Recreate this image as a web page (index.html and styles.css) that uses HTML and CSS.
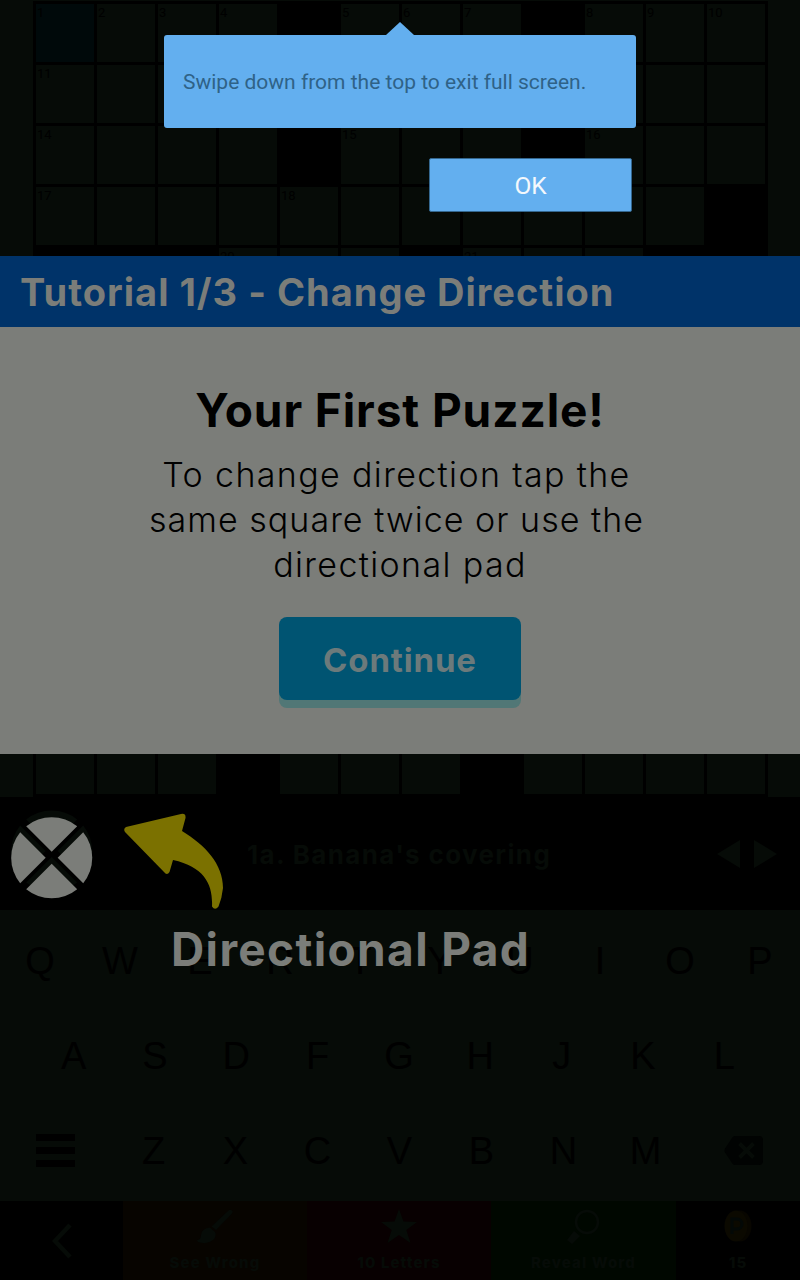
FILE: index.html
```html
<!DOCTYPE html>
<html lang="en">
<head>
<meta charset="utf-8">
<title>Crossword</title>
<link rel="stylesheet" href="styles.css">
</head>
<body>
<div class="app">
  <section class="board"><div class="grid" id="grid"></div></section>

  <section class="clue">
    <svg class="pad" width="110" height="113" viewBox="0 0 110 113">
      <defs>
        <g id="wedges">
          <path id="wedge" d="M0-6L-25.5-31.5A40.5 40.5 0 0 1 25.5-31.5Z"/>
          <use href="#wedge" transform="rotate(90)"/>
          <use href="#wedge" transform="rotate(180)"/>
          <use href="#wedge" transform="rotate(270)"/>
        </g>
      </defs>
      <use href="#wedges" class="ink" transform="translate(51.7 54)"/>
      <use href="#wedges" class="lit" transform="translate(51.7 60.8)"/>
    </svg>
    <p class="clue-text">1a. Banana's covering</p>
    <svg class="steps" width="60" height="28" viewBox="0 0 60 28">
      <path class="ink" d="M0 14L23 0V28ZM60 14L37 0V28Z"/>
    </svg>
  </section>

  <section class="keys">
    <div class="row row-top"><span>Q</span><span>W</span><span>E</span><span>R</span><span>T</span><span>Y</span><span>U</span><span>I</span><span>O</span><span>P</span></div>
    <div class="row row-mid"><span>A</span><span>S</span><span>D</span><span>F</span><span>G</span><span>H</span><span>J</span><span>K</span><span>L</span></div>
    <div class="row row-low">
      <svg width="39" height="35" viewBox="0 0 39 35"><path d="M0 0H39V7H0ZM0 13H39V20H0ZM0 26H39V33H0Z"/></svg>
      <div class="letters"><span>Z</span><span>X</span><span>C</span><span>V</span><span>B</span><span>N</span><span>M</span></div>
      <svg width="39" height="31" viewBox="0 0 39 31"><path class="back" d="M11 0H35Q39 0 39 4V25Q39 29 35 29H11Q9 29 8 27L1 16.500Q0 14.500 1 12.500L8 2Q9 0 11 0Z"/><path class="cross" d="M15.500 7.500L29.500 21.500M29.500 7.500L15.500 21.500"/></svg>
    </div>
  </section>

  <nav class="tools">
    <div class="tool tool-back"><svg width="20" height="36" viewBox="0 0 20 36"><path class="chevron" d="M18 2L3 18L18 34"/></svg></div>
    <div class="tool tool-wrong">
      <svg width="36" height="36" viewBox="0 0 36 36"><path class="ink" d="M34 1Q37 2 34.500 5L19 21L14.500 17.500L31 2Q33 0 34 1ZM13 18.500L18 23Q20 28 16 31Q10 36 1 33L0 31Q4 31 4 26Q5 19 13 18.500Z"/></svg>
      <span>See Wrong</span>
    </div>
    <div class="tool tool-letters">
      <svg width="36" height="36" viewBox="0 0 36 36"><path class="ink" d="M18 0L22.500 12.500L36 12.900L25.300 20.900L29.500 34L18 26L6.500 34L10.700 20.900L0 12.900L13.500 12.500Z"/></svg>
      <span>10 Letters</span>
    </div>
    <div class="tool tool-reveal">
      <svg width="36" height="36" viewBox="0 0 36 36"><circle class="lens" cx="21" cy="13" r="11"/><path class="ink" d="M8 22L14 27L6 35L1 31Z"/></svg>
      <span>Reveal Word</span>
    </div>
    <div class="tool tool-coins">
      <svg width="28" height="36" viewBox="0 0 28 36"><ellipse class="coin-edge" cx="16" cy="17" rx="11.500" ry="15.500"/><ellipse class="coin" cx="12" cy="17" rx="11.500" ry="15.500"/><path class="coin-mark" d="M8 25V10H13A4.500 4.500 0 0 1 13 20H8"/></svg>
      <span>15</span>
    </div>
  </nav>

  <section class="tutorial">
    <h1 class="bar"><span>Tutorial 1/3 - Change Direction</span></h1>
    <h2 class="headline">Your First Puzzle!</h2>
    <p class="body"><span class="shifted wide">To change direction tap the</span><span class="shifted">same square twice or use the</span><span class="wide">directional pad</span></p>
    <button class="continue">Continue</button>
  </section>

  <svg class="pointer" width="110" height="100" viewBox="120 810 110 100"><path d="M126 827L181 814Q186 813 185.500 818L182 831C205 845 223 864 223 888Q222 898 218.500 906.500Q215 911 212 906.500C213 885 205 867 173 860L169.500 872Q167 876 164 872L125 832Q123 829 126 827Z"/></svg>
  <p class="pad-label">Directional Pad</p>

  <aside class="notice">
    <div class="bubble">Swipe down from the top to exit full screen.</div>
    <button class="ok">OK</button>
  </aside>
</div>
<script src="grid.js"></script>
</body>
</html>
```

FILE: styles.css
```css
* { box-sizing: border-box; }
body { margin: 0; background: #000; font-family: Inter, "Liberation Sans", sans-serif; }
h1, h2, p { margin: 0; }
svg { display: block; flex: none; }
button { font: inherit; border: 0; padding: 0; }

.app { position: relative; width: 800px; height: 1280px; overflow: hidden; display: flex; flex-direction: column; }
.ink { fill: #060b07; }
.lit { fill: #7b7d79; }

.board { height: 797px; padding: 1px 32px 0 33px; background: #060b07; flex: none; }
.grid { width: 735px; height: 796px; padding: 3px 0 0 3px; background: #000; display: grid; grid-template-columns: repeat(12, 58px); grid-auto-rows: 58px; gap: 3px; }
.cell { background: #060b07; color: #000; font: 13px/17px Roboto, sans-serif; padding-left: 1px; }
.cell.black { background: #000; }
.cell.active { background: #00090a; }

.clue { height: 113px; flex: none; display: flex; align-items: center; background: #000; }
.clue-text { flex: 1; padding: 2px 0 0 137px; font-weight: 700; font-size: 26px; color: #060b07; white-space: nowrap; letter-spacing: 1.35px; }
.steps { margin-right: 23px; }

.keys { height: 291px; flex: none; background: #060b07; padding-top: 4px; font: 38px/95px "Liberation Sans", sans-serif; color: #000; text-align: center; }
.row { display: flex; height: 95px; }
.row span { flex: 1; }
.row-mid { padding: 0 35px 0 33px; }
.row-low { align-items: center; padding: 0 37px 0 36px; justify-content: space-between; }
.letters { display: flex; width: 574px; }
.back { fill: #010302; }
.cross { stroke: #060b07; stroke-width: 4; fill: none; }

.tools { height: 79px; flex: none; display: flex; background: #000; color: #060b07; font-weight: 800; font-size: 15px; line-height: 20px; }
.tool { display: flex; flex-direction: column; align-items: center; padding-top: 8px; gap: 8px; letter-spacing: 1.1px; white-space: nowrap; }
.tool-back { width: 123px; padding-top: 22px; }
.tool-wrong { width: 184px; background: #070400; }
.tool-letters { width: 184px; background: #080001; }
.tool-reveal { width: 185px; background: #000700; }
.tool-coins { width: 124px; }
.chevron { fill: none; stroke: #060b07; stroke-width: 4.5; }
.lens { fill: none; stroke: #060b07; stroke-width: 2.5; }
.coin { fill: #0b0900; }
.coin-edge { fill: #080600; }
.coin-mark { fill: none; stroke: #030806; stroke-width: 3; }

.tutorial { position: absolute; top: 256px; left: 0; width: 800px; height: 498px; background: #7b7d79; display: flex; flex-direction: column; align-items: center; }
.bar { align-self: stretch; height: 71px; padding-left: 20px; background: #003369; color: #7b7d79; font-size: 38px; line-height: 72px; white-space: nowrap; letter-spacing: 1px; }
.headline { margin-top: 53px; font-size: 46px; line-height: 60px; color: #000; white-space: nowrap; letter-spacing: 0.9px; }
.body { margin-top: 12px; display: flex; flex-direction: column; align-items: center; font-size: 34px; line-height: 45px; font-weight: 300; color: #000; white-space: nowrap; letter-spacing: 1.03px; }
.wide { letter-spacing: 1.36px; }
.shifted { margin-right: 7px; }
.continue { margin-top: 30px; width: 242px; height: 83px; border-radius: 8px; background: #005472; box-shadow: 0 8px 0 #517776; color: #6c7a7b; font-weight: 700; font-size: 33px; line-height: 87px; letter-spacing: 0.85px; }

.pointer { position: absolute; left: 120px; top: 810px; fill: #7b7100; }
.pad-label { position: absolute; left: 171px; top: 919px; font-size: 46px; line-height: 60px; font-weight: 700; color: #7b7d79; white-space: nowrap; letter-spacing: 1.35px; }

.notice { position: absolute; top: 35px; left: 164px; width: 472px; display: flex; flex-direction: column; align-items: flex-end; font-family: Roboto, sans-serif; }
.bubble { position: relative; width: 472px; height: 93px; padding-left: 19px; border-radius: 3px; background: #63afef; color: #2f6287; font-size: 21px; line-height: 95px; white-space: nowrap; }
.bubble::before { content: ""; position: absolute; left: 222px; top: -13px; border: 14px solid transparent; border-top: 0; border-bottom: 13px solid #63afef; }
.ok { margin: 30px 4px 0 0; width: 203px; height: 54px; border: 1px solid #34678f; border-radius: 2px; background: #63afef; color: #f4f8fc; font-size: 24.5px; line-height: 53px; }
```

FILE: grid.js
```js
// One string per row: "#" is a blocked square, "." an open one.
const rows = [
  "....#...#...", "............", "....#...#...", "...........#",
  "###...#...##", "............", "............", "............",
  "............", "............", "............", "............",
  "...#...#...."
];
// Clue numbers keyed by "row,column".
const numbers = {
  "0,0": 1, "0,1": 2, "0,2": 3, "0,3": 4, "0,5": 5, "0,6": 6, "0,7": 7,
  "0,9": 8, "0,10": 9, "0,11": 10, "1,0": 11, "1,4": 12, "1,8": 13,
  "2,0": 14, "2,5": 15, "2,9": 16, "3,0": 17, "3,4": 18, "3,8": 19,
  "4,3": 20, "4,7": 21
};
const grid = document.getElementById("grid");
rows.forEach((row, r) => [...row].forEach((mark, c) => {
  const cell = document.createElement("div");
  cell.className = "cell" + (mark === "#" ? " black" : "") + (r + c === 0 ? " active" : "");
  cell.textContent = numbers[r + "," + c] || "";
  grid.append(cell);
}));
```
